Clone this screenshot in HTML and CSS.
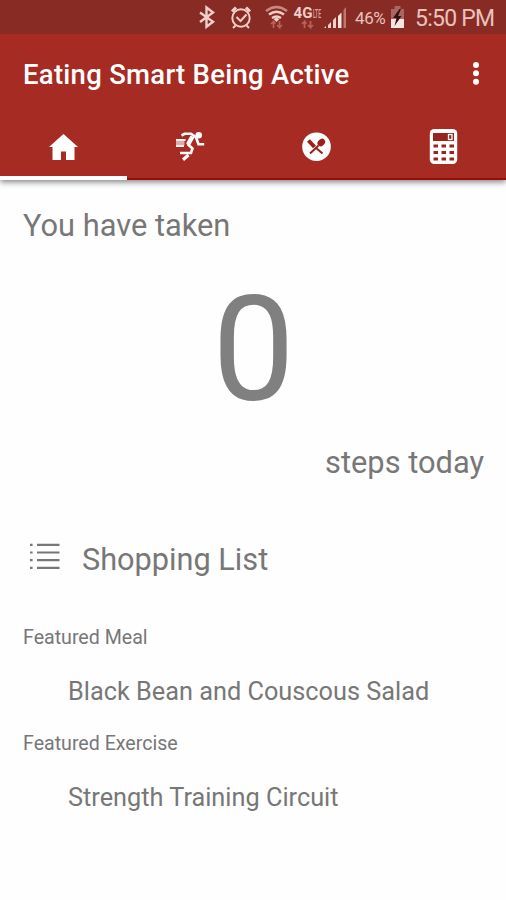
FILE: index.html
```html
<!DOCTYPE html>
<html lang="en">
<head>
<meta charset="utf-8">
<title>Eating Smart Being Active</title>
<link rel="stylesheet" href="styles.css">
</head>
<body>
<header class="header">
  <div class="status">
    <svg class="status-icons" width="160" height="34" viewBox="190 0 160 34" fill="none" stroke="#f0cfca">
      <path d="M200 12.500l13 9.300-6.500 5V7.500l6.500 5L200 22" stroke-width="2.400"/>
      <g stroke-width="2"><circle cx="241" cy="18" r="8.700"/><path d="M236.500 17l4 4 6-6.500M235.500 25.500l-2.500 2.500M246.500 25.500l2.500 2.500"/><path d="M232 11.500l4-4M250 11.500l-4-4" stroke-width="3"/></g>
      <g stroke-width="2.300"><path d="M266 11q10.500-8 21 0" stroke="#c98983"/><path d="M269 14.500q7.500-5.500 15 0M272 18q4.500-3 9 0"/></g>
      <path d="M276.500 17.500l3 1.500-3 3-3-3z" fill="#f0cfca" stroke="none"/>
      <g stroke="#bd625b" stroke-width="1.700"><path d="M273.500 28v-6.500l-2.500 2.500M273.500 21.500l2 2M279.500 21v6.500l-2.500-2.500M279.500 27.500l2.500-2.500M304.500 28v-6.500l-2.500 2.500M304.500 21.500l2 2M310.500 21v6.500l-2.500-2.500M310.500 27.500l2.500-2.500"/></g>
      <text class="network" x="293.500" y="18" textLength="19" lengthAdjust="spacingAndGlyphs">4G</text>
      <text class="lte" x="313" y="17.500" textLength="8" lengthAdjust="spacingAndGlyphs">LTE</text>
      <g stroke="none"><path d="M324 28h2v-2zM328 28h3v-6l-3 3zM333 28h3V17l-3 3z" fill="#f0cfca"/><path d="M338 28h3.500V12.500L338 16z" fill="#f8e5e1"/><path d="M343.500 28h2.500V7l-2.500 3z" fill="#be7770"/></g>
    </svg>
    <span class="percent">46%</span>
    <svg class="battery" width="16" height="34" viewBox="390 0 16 34"><path d="M391 9h3.500V6h6v3h3.500v11h-13z" fill="#aa6660"/><path d="M391 19h13v9h-13z" fill="#f6e5e1"/><path d="M399.500 9l-6.500 9h3.500l-2 8 7-10h-3.500l3-7z" fill="#34100e"/></svg>
    <span class="clock">5:50 PM</span>
  </div>
  <div class="toolbar">
    <h1 class="title">Eating Smart Being Active</h1>
    <svg class="more" width="8" height="24" viewBox="0 0 8 24" fill="#fff"><circle cx="4" cy="3" r="3"/><circle cx="4" cy="11.300" r="3"/><circle cx="4" cy="19.700" r="3"/></svg>
  </div>
  <nav class="tabs">
    <a class="tab active"><svg width="40" height="40" viewBox="43 126.500 40 40" fill="#fff"><path d="M63.500 133.500l14.500 13h-3.500v13H66v-8.500h-5v8.500h-8.500v-13H49z"/></svg></a>
    <a class="tab"><svg width="40" height="40" viewBox="170 127 40 40" fill="none" stroke="#fff" stroke-width="2.600"><circle cx="198.700" cy="135.300" r="3.300" fill="#fff" stroke="none"/><path d="M181.500 135.500l3-1.700h6.500l5 3.500 2.500 7h5.700"/><path d="M192.500 136.500l-4.500 8" stroke-width="4.500"/><path d="M187.500 144l5 4.500-1.500 4.500H180"/><path d="M188.500 155l-5.500 4.800" stroke-width="3.200"/><path d="M176 140h9.500M176 146h8" stroke-width="1.800"/><path d="M176 143h8.500" stroke="#e2aaa5" stroke-width="4.500"/></svg></a>
    <a class="tab"><svg width="40" height="40" viewBox="296.500 127 40 40"><circle cx="317" cy="146.700" r="14.300" fill="#fff"/><g stroke="#9a211b" fill="none"><path d="M310.500 153.500l8.500-8M316 147.500l7 6" stroke-width="2"/><path d="M309 140.500l6 6.500" stroke-width="4"/></g><ellipse cx="321.800" cy="142.500" rx="4.200" ry="3.200" transform="rotate(-42 321.800 142.500)" fill="#9a211b"/></svg></a>
    <a class="tab"><svg width="40" height="40" viewBox="423 127 40 40"><rect x="429.800" y="129" width="27.400" height="35" rx="4.500" fill="#fff"/><path d="M433 133h21v8h-21z" fill="#99231e"/><rect x="448.500" y="134.500" width="3.500" height="5" fill="none" stroke="#fff" stroke-width="1.300"/><path d="M433.500 146h4.500m3.500 0h4.500m3.500 0h4.500M433.500 152.500h4.500m3.500 0h4.500m3.500 0h4.500M433.500 159h4.500m3.500 0h4.500m3.500 0h4.500" stroke="#99231e" stroke-width="3.200"/></svg></a>
  </nav>
</header>
<main class="content">
  <p class="lead">You have taken</p>
  <p class="count">0</p>
  <p class="steps">steps today</p>
  <a class="shopping"><svg width="34" height="30" viewBox="28 543 34 30" stroke="#777" stroke-width="2.200"><path d="M37 544.800h22.500M37 552.500h22.500M37 560.200h22.500M37 567.800h22.500M30 544.800h2.600M30 552.500h2.600M30 560.200h2.600M30 567.800h2.600"/></svg><span>Shopping List</span></a>
  <h2 class="label">Featured Meal</h2>
  <p class="item meal">Black Bean and Couscous Salad</p>
  <h2 class="label">Featured Exercise</h2>
  <p class="item exercise">Strength Training Circuit</p>
</main>
</body>
</html>
```

FILE: styles.css
```css
* { box-sizing: border-box; }
body { margin: 0; height: 900px; background: #fefefe; color: #777; font-family: Roboto, sans-serif; overflow: hidden; }
h1, h2, p { margin: 0; font-weight: 400; white-space: nowrap; }
svg { display: block; flex: none; }
.header { height: 180px; background: #a62b22; border-bottom: 2px solid #9b0c08; box-shadow: 0 2px 6px rgba(0, 0, 0, .5); }
.status { display: flex; height: 34px; padding-left: 190px; background: #882b25; color: #e8c2bd; line-height: 36px; white-space: nowrap; }
.network { font-size: 15px; font-weight: 700; fill: #f0cfca; stroke: none; }
.lte { font-size: 12px; font-weight: 500; fill: #dda8a2; stroke: none; }
.percent { width: 34px; margin-left: 5px; font-size: 17px; letter-spacing: -.4px; }
.battery { margin-left: 1px; }
.clock { margin-left: 9px; font-size: 23px; letter-spacing: -.75px; line-height: 37px; }
.toolbar { display: flex; align-items: center; justify-content: space-between; height: 80px; padding: 0 26px 0 23px; }
.title { color: #fff; font-size: 27.5px; font-weight: 500; letter-spacing: .27px; line-height: 78px; padding-top: 1px; }
.tabs { display: grid; grid-template-columns: repeat(4, 1fr); height: 66px; }
.tab { display: flex; justify-content: center; padding-top: 13px; }
.active { border-bottom: 4px solid #fff; }
.content { padding: 26px 22px 0 23px; }
.lead, .steps { font-size: 30.8px; line-height: 40px; }
.count { margin-top: 14px; font-size: 147px; line-height: 180px; text-align: center; color: #808080; }
.steps { margin-top: 3px; text-align: right; }
.shopping { display: flex; align-items: center; height: 40px; margin-top: 56px; padding-left: 5px; gap: 20px; font-size: 30.700px; }
.shopping svg { margin-top: -2px; }
.label { margin-top: 44px; font-size: 19.600px; line-height: 30px; }
.item { margin-top: 22px; padding-left: 45px; font-size: 25.300px; line-height: 34px; }
.item + .label { margin-top: 20px; }
```
